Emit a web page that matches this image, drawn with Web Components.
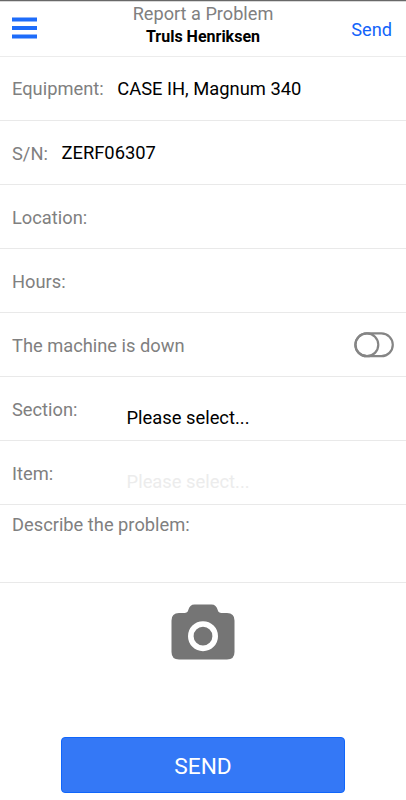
<!DOCTYPE html>
<html lang="en"><head><meta charset="utf-8"><title>Report a Problem</title>
<style>body{margin:0;background:#fff;font-family:Roboto,"Liberation Sans",sans-serif;font-size:18px;line-height:24px;color:#000}</style>
</head><body>
<report-page></report-page>
<script>
const define = (name, html) => customElements.define(name, class extends HTMLElement {
  constructor() { super(); this.attachShadow({mode: 'open'}).innerHTML = html; }
});

define('app-header', `<style>
:host{display:grid;grid-template-columns:60px 1fr 60px;height:57px;box-sizing:border-box;border-top:1px solid #686868;border-bottom:1px solid #ececec;box-shadow:inset 0 1px #d8d8d8}
svg{display:block;margin:16px 0 0 12px}
.mid{text-align:center;padding-top:1px;white-space:nowrap}
.title{color:#808080;font-size:18.150px}
.name{font-size:16px;font-weight:700;line-height:22px}
.send{color:#1263fa;padding:17px 14px 0 0;text-align:right;font-size:18.200px}
</style>
<svg width="26" height="23" viewBox="0 0 26 23"><g fill="#1e6cfa"><path d="M0 .5h25v4H0zM0 9h25v4H0zM0 17.5h25v4H0z"/></g></svg>
<div class="mid"><div class="title"><slot name="title"></slot></div><div class="name"><slot name="name"></slot></div></div>
<div class="send"><slot name="action"></slot></div>`);

define('form-row', `<style>
:host{display:flex;height:64px;box-sizing:border-box;border-bottom:1px solid #e9e9e9;padding:21px 12px 0;white-space:nowrap}
.label{color:#808080;font-size:18.300px}
.value{margin:var(--value-top,0) 0 0 var(--gap,13.600px);color:var(--value-color,#000);font-size:18.350px}
.end{margin-left:auto}
</style>
<div class="label"><slot name="label"></slot></div><div class="value"><slot></slot></div><div class="end"><slot name="end"></slot></div>`);

define('toggle-switch', `<style>:host{display:block}svg{display:block}</style>
<svg width="40" height="26" viewBox="0 0 40 26" fill="none" stroke="#858585" stroke-width="2.200"><rect x="1.300" y="1.400" width="37.500" height="22.800" rx="11.400"/><circle cx="12.900" cy="12.800" r="11.400"/></svg>`);

define('photo-button', `<style>:host{display:flex;justify-content:center}svg{display:block}</style>
<svg width="64" height="56" viewBox="0 0 64 56"><path fill="#757575" d="M8 9h5.500q3 0 3.700-2.700Q18.700 0.500 23.500 0.500h17q4.800 0 6.300 5.800Q47.500 9 50.500 9H56q7.500 0 7.500 7.500V48q0 7.500-7.500 7.500H8Q.5 55.500.5 48V16.500Q.5 9 8 9z"/><circle cx="32" cy="32.200" r="12.200" fill="none" stroke="#fff" stroke-width="5.600"/></svg>`);

define('primary-button', `<style>
:host{display:flex;justify-content:center}
button{width:284px;height:56px;padding:4px 0 0;border:1px solid #1066fb;border-radius:4px;background:#3478f6;color:#fff;font:22.700px/28px Roboto,"Liberation Sans",sans-serif}
</style><button><slot></slot></button>`);

define('report-page', `<style>
:host{display:flex;flex-direction:column;height:800px;overflow:hidden}
.equipment{padding-top:20px}
.sn{--value-top:-1px}
.section{--gap:49px;--value-top:8px}
.item{--gap:73.500px;--value-top:8px;--value-color:#ececec}
toggle-switch{margin-top:-2px}
.text{height:78px;padding-top:8px}
photo-button{margin-top:21px}
primary-button{margin-top:77px}
</style>
<app-header><span slot="title">Report a Problem</span><span slot="name">Truls Henriksen</span><span slot="action">Send</span></app-header>
<form-row class="equipment"><span slot="label">Equipment:</span>CASE IH, Magnum 340</form-row>
<form-row class="sn"><span slot="label">S/N:</span>ZERF06307</form-row>
<form-row><span slot="label">Location:</span></form-row>
<form-row><span slot="label">Hours:</span></form-row>
<form-row><span slot="label">The machine is down</span><toggle-switch slot="end"></toggle-switch></form-row>
<form-row class="section"><span slot="label">Section:</span>Please select...</form-row>
<form-row class="item"><span slot="label">Item:</span>Please select...</form-row>
<form-row class="text"><span slot="label">Describe the problem:</span></form-row>
<photo-button></photo-button>
<primary-button>SEND</primary-button>`);
</script></body></html>
